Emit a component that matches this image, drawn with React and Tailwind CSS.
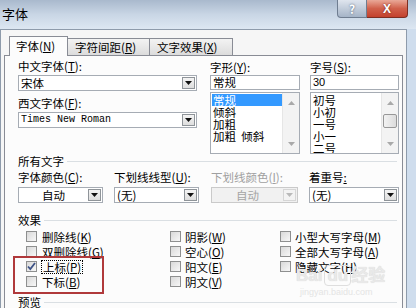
import React from 'react';

const Key = ({ k }) => (
  <span>(<span className="underline underline-offset-1">{k}</span>)</span>
);

const Arrow = ({ color = '#000', up }) => (
  <svg width="7" height="4" viewBox="0 0 7 4">
    <path d={up ? 'M0 4h7L3.5 0z' : 'M0 0h7L3.5 4z'} fill={color} />
  </svg>
);

const Combo = ({ text, center, mono, disabled }) => (
  <div
    className={
      disabled
        ? 'h-[16px] border border-[#cacaca] bg-[#f1f1f1] text-[#a4a4a4] flex items-center'
        : 'h-[16px] border border-[#a6acb4] bg-white flex items-center'
    }
  >
    <span
      className={
        mono
          ? "flex-1 pl-[2px] font-['Liberation_Mono',monospace] text-[10px] leading-[14px] whitespace-nowrap"
          : center
          ? 'flex-1 text-center leading-[14px] whitespace-nowrap'
          : 'flex-1 pl-[2px] leading-[14px] whitespace-nowrap'
      }
    >
      {text}
    </span>
    <div
      className={
        disabled
          ? 'w-[13px] h-[12px] mr-px border border-[#d6d6d6] bg-[#f3f3f3] flex items-center justify-center'
          : 'w-[13px] h-[12px] mr-px border border-[#8f9499] bg-linear-to-b from-[#f4f4f4] to-[#dedede] flex items-center justify-center'
      }
    >
      <Arrow color={disabled ? '#b9b9b9' : '#111'} />
    </div>
  </div>
);

const ListBox = ({ items, selected, thumb }) => (
  <div className="mt-[2px] h-[62px] border border-[#a6acb4] bg-white flex overflow-hidden">
    <div className="flex-1 pt-px pl-px overflow-hidden">
      {items.map((it, i) => (
        <div
          key={it}
          className={
            i === selected
              ? 'h-[12px] leading-[12px] pl-[1px] bg-[#3399ff] text-white whitespace-pre'
              : 'h-[12px] leading-[12px] pl-[1px] whitespace-pre'
          }
        >
          {it}
        </div>
      ))}
    </div>
    <div className="w-[17px] bg-[#f3f3f3] border-l border-[#e6e6e6] flex flex-col items-center">
      <div className="h-[17px] flex items-center justify-center pt-[2px]">
        <Arrow up color="#a9a9a9" />
      </div>
      <div className="flex-1 w-full px-px pt-[4px]">
        {thumb && (
          <div className="h-[14px] rounded-[2px] border border-[#979797] bg-linear-to-r from-[#f2f2f2] to-[#dcdcdc]" />
        )}
      </div>
      <div className="h-[17px] flex items-center justify-center pb-[2px]">
        <Arrow color="#a9a9a9" />
      </div>
    </div>
  </div>
);

const Check = ({ checked }) => (
  <div className="w-[11px] h-[11px] shrink-0 border border-[#8e8f8f] bg-linear-to-br from-[#d9d9d9] to-[#f7f7f7] flex items-center justify-center">
    {checked && (
      <svg width="9" height="9" viewBox="0 0 9 9">
        <path d="M1 4.5l2.3 2.6L8 1" stroke="#3d5286" strokeWidth="1.8" fill="none" />
      </svg>
    )}
  </div>
);

const Option = ({ label, k, checked, focus, gap = 'ml-[4px]' }) => (
  <div className="h-[15px] flex items-center">
    <Check checked={checked} />
    <span
      className={
        focus
          ? 'ml-[4px] leading-[12px] border border-dotted border-black px-px'
          : gap + ' leading-[14px]'
      }
    >
      {label}
      <Key k={k} />
    </span>
  </div>
);

const Section = ({ title }) => (
  <div className="h-[14px] flex items-center">
    <span className="leading-[14px]">{title}</span>
    <div className="flex-1 h-px bg-[#dadfe3] ml-[3px] mr-[2px] mt-[1px]" />
  </div>
);

export default function App() {
  return (
    <div className="w-[416px] h-[308px] overflow-hidden relative bg-[#cfdded] text-black text-[11.5px] font-['Noto_Sans_CJK_SC',sans-serif]">
      {/* title bar */}
      <div className="h-[29px] flex items-start bg-linear-to-b from-[#a9b9cd] via-[#c9d6e5] to-[#dde7f2]">
        <span className="ml-[2px] mt-[6px] text-[13px] leading-[16px]">字体</span>
        <div className="ml-auto mr-[8px] flex">
          <div className="w-[30px] h-[18px] rounded-bl-[4px] border border-t-0 border-[#6f7d90] bg-linear-to-b from-[#dfe5ee] to-[#a5b4c7] flex items-center justify-center text-white font-bold text-[12px] leading-none [text-shadow:0_0_2px_#41516a]">
            ?
          </div>
          <div className="w-[41px] h-[18px] rounded-br-[4px] border border-t-0 border-l-0 border-[#7d2e22] bg-linear-to-b from-[#e9a898] via-[#d0604b] to-[#c3412d] flex items-center justify-center text-white font-bold text-[12px] leading-none font-['Liberation_Sans',sans-serif] [text-shadow:0_0_2px_#6b1b10]">
            X
          </div>
        </div>
      </div>

      {/* client area */}
      <div className="h-[279px] mr-[9px] bg-[#f6f6f6] border-t border-l border-r border-[#8e9bab] pt-[6px] px-[3px]">
        <div className="flex h-[20px] pl-[5px] items-end relative z-10">
          <div className="w-[59px] h-[20px] border border-b-0 border-[#898c95] bg-[#fcfcfc] pl-[6px] pt-[2px] leading-[14px]">
            字体<Key k="N" />
          </div>
          <div className="w-[82px] h-[17px] mb-px border-t border-r border-[#898c95] bg-linear-to-b from-[#f3f3f3] to-[#dcdcdc] pl-[7px] leading-[16px]">
            字符间距<Key k="R" />
          </div>
          <div className="w-[83px] h-[17px] mb-px border-t border-r border-[#898c95] bg-linear-to-b from-[#f3f3f3] to-[#dcdcdc] pl-[7px] leading-[16px]">
            文字效果<Key k="X" />
          </div>
        </div>

        <div className="-mt-px h-[255px] border border-[#898c95] bg-[#fcfcfc] pl-[13px] pr-[3px]">
          {/* fonts, style, size */}
          <div className="flex pt-[3px]">
            <div className="w-[179px]">
              <div className="h-[14px] leading-[14px]">
                中文字体<Key k="T" />:
              </div>
              <div className="mt-[2px]">
                <Combo text="宋体" />
              </div>
              <div className="mt-[5px] h-[14px] leading-[14px]">
                西文字体<Key k="F" />:
              </div>
              <div className="mt-[2px]">
                <Combo text="Times New Roman" mono />
              </div>
            </div>
            <div className="ml-[13px] w-[90px]">
              <div className="h-[14px] leading-[14px] mt-px">
                字形<Key k="Y" />:
              </div>
              <div className="mt-px h-[15px] border border-[#a6acb4] bg-white pl-[2px] leading-[13px]">常规</div>
              <ListBox items={['常规', '倾斜', '加粗', '加粗  倾斜']} selected={0} />
            </div>
            <div className="ml-[10px] w-[89px]">
              <div className="h-[14px] leading-[14px] mt-px">
                字号<Key k="S" />:
              </div>
              <div className="mt-px h-[15px] border border-[#a6acb4] bg-white pl-[2px] leading-[13px] font-['Liberation_Sans',sans-serif] text-[11px]">
                30
              </div>
              <ListBox items={['初号', '小初', '一号', '小一', '二号']} thumb />
            </div>
          </div>

          {/* all text */}
          <Section title="所有文字" />
          <div className="flex mt-[2px]">
            <div className="w-[85px]">
              <div className="h-[14px] leading-[14px] whitespace-nowrap">
                字体颜色<Key k="C" />:
              </div>
              <div className="mt-[3px]">
                <Combo text="自动" center />
              </div>
            </div>
            <div className="ml-[11px] w-[85px]">
              <div className="h-[14px] leading-[14px] whitespace-nowrap">
                下划线线型<Key k="U" />:
              </div>
              <div className="mt-[3px]">
                <Combo text="(无)" />
              </div>
            </div>
            <div className="ml-[12px] w-[87px]">
              <div className="h-[14px] leading-[14px] whitespace-nowrap text-[#a0a0a0]">
                下划线颜色<Key k="I" />:
              </div>
              <div className="mt-[3px]">
                <Combo text="自动" center disabled />
              </div>
            </div>
            <div className="ml-[11px] w-[90px]">
              <div className="h-[14px] leading-[14px] whitespace-nowrap">
                着重号<span className="underline underline-offset-1">:</span>
              </div>
              <div className="mt-[3px]">
                <Combo text="(无)" />
              </div>
            </div>
          </div>

          {/* effects */}
          <div className="mt-[10px]">
            <Section title="效果" />
          </div>
          <div className="flex mt-[2px]">
            <div className="w-[152px] pl-[8px]">
              <Option label="删除线" k="K" gap="ml-[5px]" />
              <Option label="双删除线" k="G" gap="ml-[5px]" />
              <Option label="上标" k="P" checked focus />
              <Option label="下标" k="B" gap="ml-[5px]" />
            </div>
            <div className="w-[110px]">
              <Option label="阴影" k="W" />
              <Option label="空心" k="O" />
              <Option label="阳文" k="E" />
              <Option label="阴文" k="V" />
            </div>
            <div className="flex-1">
              <Option label="小型大写字母" k="M" />
              <Option label="全部大写字母" k="A" />
              <Option label="隐藏文字" k="H" />
            </div>
          </div>

          <div className="mt-[6px]">
            <Section title="预览" />
          </div>
        </div>
      </div>

      {/* annotation and watermark overlays */}
      <div className="absolute left-[13px] top-[256px] w-[91px] h-[38px] border-2 border-[#b0393b]" />
      <div className="absolute left-[296px] top-[264px] text-[17px] font-bold leading-[20px] text-[#e9e9e9] font-['Liberation_Sans',sans-serif] [text-shadow:0_0_1px_#d0d0d0]">
        Bai<span className="ml-[2px] px-[2px] rounded-[4px] border border-[#dedede]">du</span>
        <span className="font-['Noto_Sans_CJK_SC',sans-serif]">经验</span>
      </div>
      <div className="absolute left-[300px] top-[287px] text-[9px] leading-[10px] text-[#e4e4e4] font-['Liberation_Sans',sans-serif]">
        jingyan.baidu.com
      </div>
    </div>
  );
}
